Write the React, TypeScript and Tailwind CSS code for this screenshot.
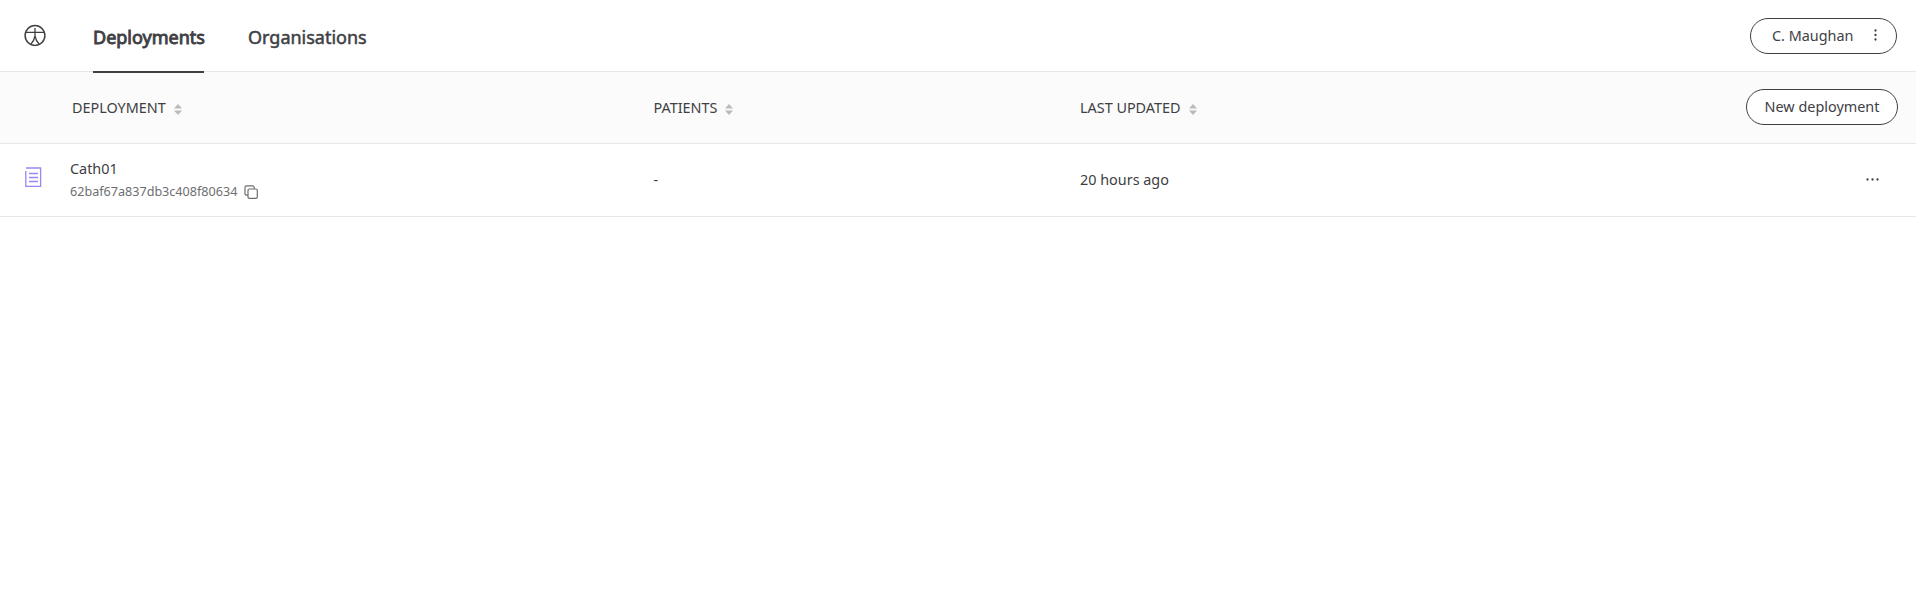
import React from "react";

function SortIcon() {
  return (
    <svg width="8" height="11" viewBox="0 0 8 11" fill="#bababa" className="mt-[3px] shrink-0">
      <path d="M4 0 8 4.4H0z" />
      <path d="M4 11 8 6.6H0z" />
    </svg>
  );
}

function HeaderCell({ label, className }: { label: string; className: string }) {
  return (
    <div className={`flex shrink-0 items-center ${className}`}>
      <span>{label}</span>
      <SortIcon />
    </div>
  );
}

export default function App() {
  return (
    <div className="min-h-[615px] w-full bg-white font-['Noto_Sans',sans-serif] text-[14.4px] leading-5 text-[#404044]">
      <header className="flex h-[72px] items-start border-b border-[#e7e7e7] pl-6 pr-[19px]">
        <svg width="22" height="22" viewBox="0 0 22 22" fill="none" stroke="#404044" strokeWidth="1.5" className="mt-6 shrink-0">
          <circle cx="11" cy="11.5" r="9.9" />
          <path d="M2 8.4H20M11 4V12.2M11 12C10.4 15 9 18 7 20M11 12C11.6 15 13 18 15 20" strokeWidth="1.3" />
        </svg>
        <nav className="ml-[47px] flex gap-[44px] text-lg leading-7">
          <a className="h-[73px] w-[111px] whitespace-nowrap border-b-2 border-[#404044] pt-[23px] [-webkit-text-stroke:0.9px_#404044]">
            Deployments
          </a>
          <a className="h-[73px] whitespace-nowrap pt-[23px] [-webkit-text-stroke:0.5px_#404044]">Organisations</a>
        </nav>
        <button className="ml-auto mt-[18px] flex h-9 w-[147px] items-center rounded-full border border-[#404044] pl-[21px] pr-[19px]">
          C. Maughan
          <svg width="3" height="12" viewBox="0 0 3 12" fill="#404044" className="mb-[2px] ml-auto">
            <circle cx="1.5" cy="1.5" r="1.15" />
            <circle cx="1.5" cy="6" r="1.15" />
            <circle cx="1.5" cy="10.5" r="1.15" />
          </svg>
        </button>
      </header>
      <main>
        <div className="flex h-[72px] items-center border-b border-[#e7e7e7] bg-[#fbfbfb] pl-[72px] pr-[18px]">
          <HeaderCell label="DEPLOYMENT" className="w-[581.5px] gap-[8px]" />
          <HeaderCell label="PATIENTS" className="w-[426.5px] gap-[7.5px]" />
          <HeaderCell label="LAST UPDATED" className="gap-[8px]" />
          <button className="mb-[2px] ml-auto h-9 w-[152px] whitespace-nowrap rounded-full border border-[#404044] bg-white">
            New deployment
          </button>
        </div>
        <div className="flex h-[73px] items-center border-b border-[#e7e7e7] pl-[25px] pr-[37.5px]">
          <svg width="17" height="20" viewBox="0 0 17 20" fill="none" stroke="#9b86f3" strokeWidth="1.3" className="mb-[6px] shrink-0">
            <path d="M1 1H15.6V19.3H.8V4M4 6.5H13M4 10.5H13M4 14.5H13" />
          </svg>
          <div className="ml-7 w-[583.5px] shrink-0">
            <div>Cath01</div>
            <div className="mt-[3px] flex h-5 items-center text-[12.6px] text-[#6d6e72]">
              62baf67a837db3c408f80634
              <svg width="14" height="14" viewBox="0 0 14 14" fill="none" stroke="#6d6e72" strokeWidth="1.2" className="ml-[7px]">
                <rect x="4" y="4" width="9.3" height="9.3" rx="1.4" />
                <path d="M4 10.2H2.5A1.5 1.5 0 0 1 1 8.7V2.4A1.5 1.5 0 0 1 2.5.9H8.7A1.5 1.5 0 0 1 10.2 2.4V4" />
              </svg>
            </div>
          </div>
          <div className="w-[426.5px] shrink-0">-</div>
          <div>20 hours ago</div>
          <svg width="13" height="3" viewBox="0 0 13 3" fill="#404044" className="mb-[1px] ml-auto">
            <circle cx="1.5" cy="1.5" r="1.15" />
            <circle cx="6.5" cy="1.5" r="1.15" />
            <circle cx="11.5" cy="1.5" r="1.15" />
          </svg>
        </div>
      </main>
    </div>
  );
}
